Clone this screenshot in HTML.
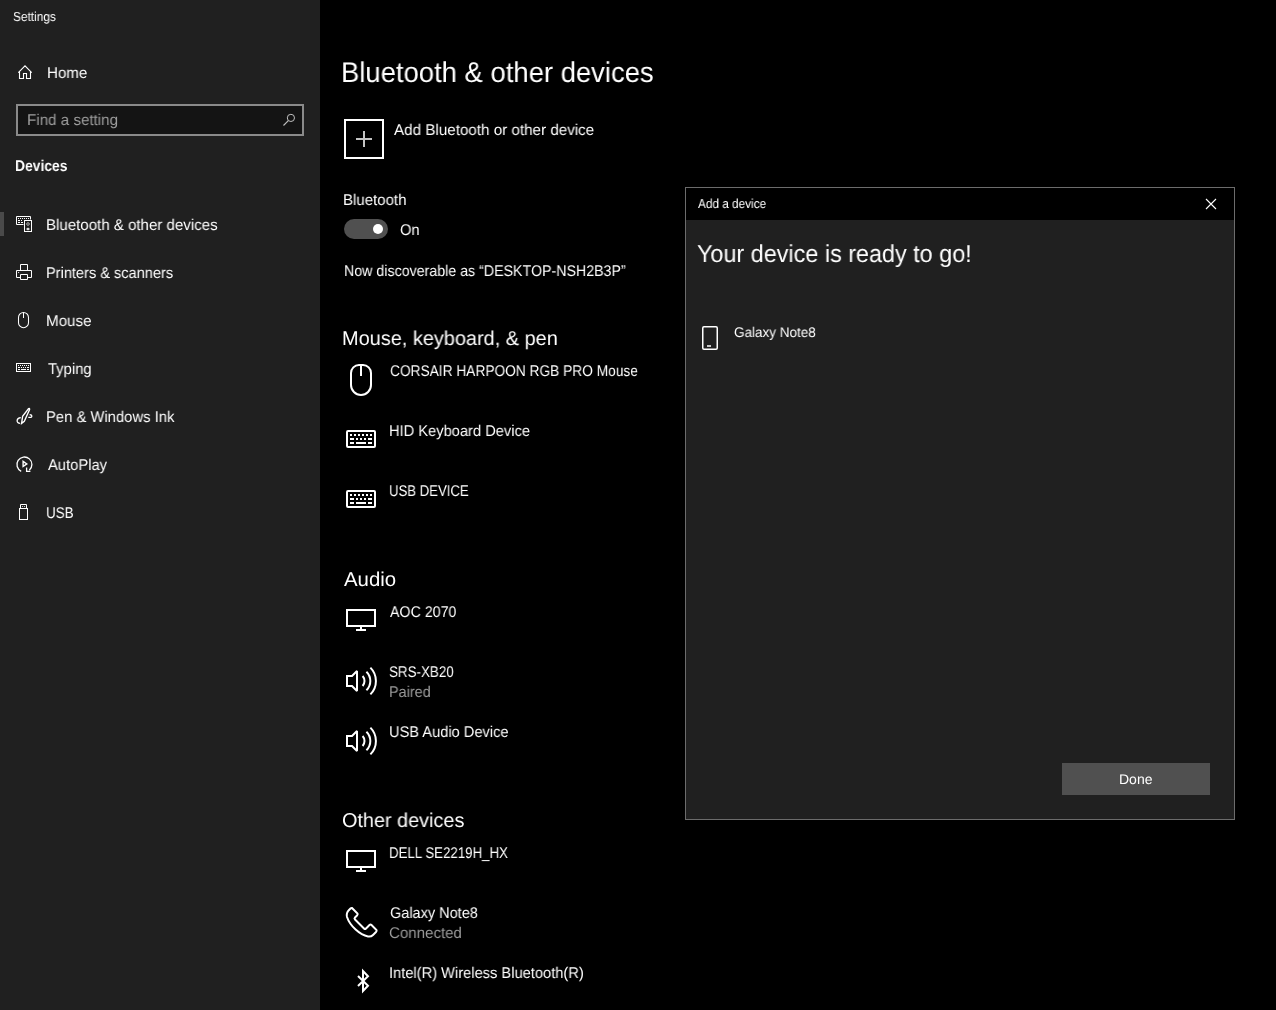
<!DOCTYPE html>
<html><head><meta charset="utf-8"><style>
html,body{margin:0;padding:0;}
body{width:1276px;height:1010px;background:#000;position:relative;overflow:hidden;font-family:"Liberation Sans",sans-serif;}
.t{position:absolute;white-space:nowrap;line-height:1;transform-origin:0 0;text-rendering:geometricPrecision;will-change:transform;}
.a{position:absolute;}
svg{position:absolute;overflow:visible;}
</style></head><body>
<div class="a" style="left:0;top:0;width:320px;height:1010px;background:#202020"></div>
<div class="a" style="left:0;top:212px;width:4px;height:24px;background:#4a4a4a"></div>
<div class="a" style="left:16px;top:104px;width:284px;height:28px;border:2px solid #8a8a8a;background:#141414"></div>
<div class="a" style="left:344px;top:219px;width:44px;height:20px;border-radius:10px;background:#505050"></div>
<div class="a" style="left:373px;top:224px;width:10px;height:10px;border-radius:5px;background:#fff"></div>
<div class="a" style="left:685px;top:187px;width:548px;height:631px;border:1px solid #6c6c6c;background:#202020"></div>
<div class="a" style="left:686px;top:188px;width:548px;height:32px;background:#000"></div>
<div class="a" style="left:1062px;top:763px;width:148px;height:32px;background:#505050"></div>
<svg width="1276" height="1010" style="left:0;top:0" fill="none" stroke="#fff">
 <!-- home -->
 <path d="M18.3,72.6 L25,65.9 L31.7,72.6 M19.5,71.5 V78.5 H23.5 V73.5 H26.5 V78.5 H30.5 V71.5" stroke-width="1.1"/>
 <!-- search -->
 <circle cx="290.9" cy="117.9" r="3.6" stroke="#c0c0c0" stroke-width="1"/>
 <path d="M288.3,120.6 L283.5,125.5" stroke="#c0c0c0" stroke-width="1.1"/>
 <!-- bluetooth devices -->
 <path d="M23.5,224.5 H16.5 V216.5 H30.5 V219.5" stroke-width="1"/>
 <rect x="24.5" y="220.5" width="7" height="11" stroke-width="1"/>
 <g fill="#fff" stroke="none">
  <rect x="18" y="218" width="1" height="1"/><rect x="20" y="218" width="1" height="1"/><rect x="22" y="218" width="1" height="1"/><rect x="24" y="218" width="1" height="1"/><rect x="26" y="218" width="1" height="1"/><rect x="28" y="218" width="1" height="1"/>
  <rect x="18" y="220" width="2" height="1"/><rect x="21" y="220" width="1" height="1"/>
  <rect x="18" y="222" width="2" height="1"/><rect x="21" y="222" width="2" height="1"/>
 </g>
 <circle cx="28" cy="224" r="1.3" stroke="#bbb" stroke-width="0.9"/>
 <ellipse cx="28" cy="229" rx="1.6" ry="1.2" fill="#ddd" stroke="none"/>
 <!-- printer -->
 <path d="M20.5,270 V264.5 H27.5 V270 M20.5,277.5 H16.5 V270.5 H31.5 V277.5 H27.5 M20.5,274.5 H27.5 V279.5 H20.5 Z" stroke-width="1"/>
 <circle cx="18.6" cy="272.5" r="0.6" fill="#fff" stroke="none"/>
 <!-- mouse small -->
 <rect x="18.5" y="312.5" width="10" height="15.2" rx="5" ry="5" stroke-width="1.05"/>
 <path d="M23.5,312.5 V318" stroke-width="1"/>
 <!-- typing -->
 <rect x="16.5" y="363.5" width="14" height="8" stroke-width="1"/>
 <g fill="#fff" stroke="none">
  <rect x="18" y="365" width="1" height="1"/><rect x="20" y="365" width="1" height="1"/><rect x="22" y="365" width="1" height="1"/><rect x="24" y="365" width="1" height="1"/><rect x="26" y="365" width="1" height="1"/><rect x="28" y="365" width="1" height="1"/>
  <rect x="18" y="367" width="2" height="1"/><rect x="21" y="367" width="1" height="1"/><rect x="23" y="367" width="1" height="1"/><rect x="25" y="367" width="1" height="1"/><rect x="27" y="367" width="2" height="1"/>
  <rect x="18" y="369" width="2" height="1"/><rect x="21" y="369" width="5" height="1"/><rect x="27" y="369" width="2" height="1"/>
 </g>
 <!-- pen -->
 <path d="M21.6,423.4 L22.6,416.3 L28.6,408.6 Q29.8,407.9 29.6,409.6 L24.3,421.4 Z" stroke-width="1.35"/>
 <path d="M20.8,417.6 C16.2,417.8 15.8,423.4 20.2,423.4 M28.3,417.4 H30.6 Q32.3,417 31.6,415.4 Q31.2,414.6 29.6,414.6" stroke-width="1.3"/>
 <!-- autoplay -->
 <path d="M21.2,471.3 A7.5,7.5 0 1 1 29.3,470.2" stroke-width="1.3"/>
 <path d="M26.6,467.6 V471.4 H30.4" stroke-width="1.3"/>
 <path d="M23.1,461.4 L26.8,463.9 L23.1,466.5 Z" stroke-width="1.4"/>
 <!-- usb -->
 <path d="M20.5,508 V504.5 H26.5 V508" stroke-width="1"/>
 <rect x="19.5" y="508.5" width="8" height="11" stroke-width="1"/>
 <circle cx="22.6" cy="506.5" r="0.55" fill="#fff" stroke="none"/>
 <circle cx="24.6" cy="506.5" r="0.55" fill="#fff" stroke="none"/>

 <!-- plus box -->
 <rect x="345" y="120" width="38" height="38" stroke-width="2"/>
 <path d="M356,139 H372 M364,131 V147" stroke="#c4c4c4" stroke-width="2"/>
 <!-- mouse big -->
 <path d="M351,373 V385 A10,10 0 0 0 371,385 V373 A8,8 0 0 0 363,365 H359 A8,8 0 0 0 351,373 Z" stroke-width="2"/>
 <path d="M361,365 V376" stroke-width="2"/>
 <!-- keyboards -->
 <g id="kb">
 <rect x="347" y="431" width="28" height="16" rx="1" stroke-width="2"/>
 <g fill="#fff" stroke="none">
  <rect x="350" y="434" width="2" height="2"/><rect x="354" y="434" width="2" height="2"/><rect x="358" y="434" width="2" height="2"/><rect x="362" y="434" width="2" height="2"/><rect x="366" y="434" width="2" height="2"/><rect x="370" y="434" width="2" height="2"/>
  <rect x="350" y="438" width="4" height="2"/><rect x="356" y="438" width="2" height="2"/><rect x="360" y="438" width="2" height="2"/><rect x="364" y="438" width="2" height="2"/><rect x="368" y="438" width="4" height="2"/>
  <rect x="350" y="442" width="4" height="2"/><rect x="356" y="442" width="10" height="2"/><rect x="368" y="442" width="4" height="2"/>
 </g>
 </g>
 <use href="#kb" y="60"/>
 <!-- monitors -->
 <g id="mon">
 <rect x="347" y="610" width="28" height="16" stroke-width="2"/>
 <path d="M361,627 V629 M356,630 H366" stroke-width="2"/>
 </g>
 <use href="#mon" y="241"/>
 <!-- speakers -->
 <g id="spk">
 <path d="M347,676 H352 L357,671 V691 L352,686 H347 Z" stroke-width="2" stroke-linejoin="miter" stroke-miterlimit="2"/>
 <path d="M362.6,676 A7.5,7.5 0 0 1 362.6,686" stroke-width="2"/>
 <path d="M366.4,671.7 A13,13 0 0 1 366.4,690.3" stroke-width="2"/>
 <path d="M370.4,667.6 A19,19 0 0 1 370.4,694.4" stroke-width="2"/>
 </g>
 <use href="#spk" y="60"/>
 <!-- phone handset -->
 <path d="M352,908 L357.5,913.5 Q358,914.5 357,915.5 L355,917.5 Q354,918.5 355,919.5 L364,928.5 Q365,929.5 366,928.5 L369.5,925 Q370.5,924 371.5,925 L376.5,930 Q377,931 376,932 L373,935 Q371,937 368,936.5 C360,935 350,926 347,917 Q346,913 349,910 L350.5,908.5 Q351.2,907.8 352,908 Z" stroke-width="2"/>
 <!-- bluetooth -->
 <path d="M358,976 L368,985.8 L363,991 V971 L368,976.2 L358,986" stroke-width="2" stroke-linejoin="miter" stroke-miterlimit="3"/>
 <!-- dialog close -->
 <path d="M1206,199 L1216,209 M1216,199 L1206,209" stroke-width="1.1"/>
 <!-- dialog phone -->
 <rect x="702.75" y="326.75" width="14.5" height="22.5" rx="1.2" stroke-width="1.5"/>
 <path d="M707,346 H711" stroke-width="1.5"/>
</svg>

<span class="t" id="settings" style="left:13.09px;top:10.00px;font-size:13px;color:#fff;transform:scaleX(0.9130);">Settings</span>
<span class="t" id="home" style="left:47.02px;top:66.00px;font-size:15.5px;color:#fff;transform:scaleX(0.9750);">Home</span>
<span class="t" id="find" style="left:27.02px;top:113.00px;font-size:15.5px;color:#9e9e9e;transform:scaleX(0.9780);">Find a setting</span>
<span class="t" id="devices" style="left:15.11px;top:159.00px;font-size:15.5px;color:#fff;font-weight:700;transform:scaleX(0.8947);">Devices</span>
<span class="t" id="nb1" style="left:46.03px;top:218.00px;font-size:15.5px;color:#fff;transform:scaleX(0.9716);">Bluetooth &amp; other devices</span>
<span class="t" id="nb2" style="left:46.06px;top:266.00px;font-size:15.5px;color:#fff;transform:scaleX(0.9403);">Printers &amp; scanners</span>
<span class="t" id="nb3" style="left:46.02px;top:314.00px;font-size:15.5px;color:#fff;transform:scaleX(0.9778);">Mouse</span>
<span class="t" id="nb4" style="left:48.00px;top:362.00px;font-size:15.5px;color:#fff;transform:scaleX(0.9556);">Typing</span>
<span class="t" id="nb5" style="left:46.04px;top:410.00px;font-size:15.5px;color:#fff;transform:scaleX(0.9552);">Pen &amp; Windows Ink</span>
<span class="t" id="nb6" style="left:48.00px;top:458.00px;font-size:15.5px;color:#fff;transform:scaleX(0.9516);">AutoPlay</span>
<span class="t" id="nb7" style="left:46.13px;top:506.00px;font-size:15.5px;color:#fff;transform:scaleX(0.8667);">USB</span>
<span class="t" id="title" style="left:341.07px;top:59.00px;font-size:28.5px;color:#fff;transform:scaleX(0.9627);">Bluetooth &amp; other devices</span>
<span class="t" id="add" style="left:394.00px;top:123.00px;font-size:15.5px;color:#fff;transform:scaleX(0.9804);">Add Bluetooth or other device</span>
<span class="t" id="bt" style="left:343.03px;top:193.00px;font-size:15.5px;color:#fff;transform:scaleX(0.9688);">Bluetooth</span>
<span class="t" id="on" style="left:400.00px;top:223.00px;font-size:15.5px;color:#fff;transform:scaleX(0.9500);">On</span>
<span class="t" id="disc" style="left:344.04px;top:264.00px;font-size:15.5px;color:#fff;transform:scaleX(0.9169);">Now discoverable as &#8220;DESKTOP-NSH2B3P&#8221;</span>
<span class="t" id="h1" style="left:342.00px;top:329.00px;font-size:20px;color:#fff;transform:scaleX(0.9953);">Mouse, keyboard, &amp; pen</span>
<span class="t" id="d1" style="left:390.00px;top:364.00px;font-size:15.5px;color:#fff;transform:scaleX(0.8857);">CORSAIR HARPOON RGB PRO Mouse</span>
<span class="t" id="d2" style="left:389.05px;top:424.00px;font-size:15.5px;color:#fff;transform:scaleX(0.9459);">HID Keyboard Device</span>
<span class="t" id="d3" style="left:389.15px;top:484.00px;font-size:15.5px;color:#fff;transform:scaleX(0.8495);">USB DEVICE</span>
<span class="t" id="h2" style="left:344.00px;top:570.00px;font-size:20px;color:#fff;transform:scaleX(1.0196);">Audio</span>
<span class="t" id="d4" style="left:390.00px;top:605.00px;font-size:15.5px;color:#fff;transform:scaleX(0.9167);">AOC 2070</span>
<span class="t" id="d5" style="left:389.14px;top:665.00px;font-size:15.5px;color:#fff;transform:scaleX(0.8649);">SRS-XB20</span>
<span class="t" id="d5s" style="left:389.07px;top:685.00px;font-size:15.5px;color:#9b9b9b;transform:scaleX(0.9302);">Paired</span>
<span class="t" id="d6" style="left:389.06px;top:725.00px;font-size:15.5px;color:#fff;transform:scaleX(0.9440);">USB Audio Device</span>
<span class="t" id="h3" style="left:342.01px;top:811.00px;font-size:20px;color:#fff;transform:scaleX(0.9918);">Other devices</span>
<span class="t" id="d7" style="left:389.14px;top:846.00px;font-size:15.5px;color:#fff;transform:scaleX(0.8551);">DELL SE2219H_HX</span>
<span class="t" id="d8" style="left:390.00px;top:906.00px;font-size:15.5px;color:#fff;transform:scaleX(0.9362);">Galaxy Note8</span>
<span class="t" id="d8s" style="left:389.03px;top:926.00px;font-size:15.5px;color:#9b9b9b;transform:scaleX(0.9726);">Connected</span>
<span class="t" id="d9" style="left:389.05px;top:966.00px;font-size:15.5px;color:#fff;transform:scaleX(0.9461);">Intel(R) Wireless Bluetooth(R)</span>
<span class="t" id="dlgt" style="left:698.00px;top:197.00px;font-size:13px;color:#fff;transform:scaleX(0.9067);">Add a device</span>
<span class="t" id="ready" style="left:697.05px;top:243.00px;font-size:24.5px;color:#fff;transform:scaleX(0.9544);">Your device is ready to go!</span>
<span class="t" id="gn" style="left:734.00px;top:325.00px;font-size:14px;color:#fff;transform:scaleX(0.9647);">Galaxy Note8</span>
<span class="t" id="done" style="left:1119.00px;top:772.00px;font-size:14px;color:#fff;">Done</span>
</body></html>
